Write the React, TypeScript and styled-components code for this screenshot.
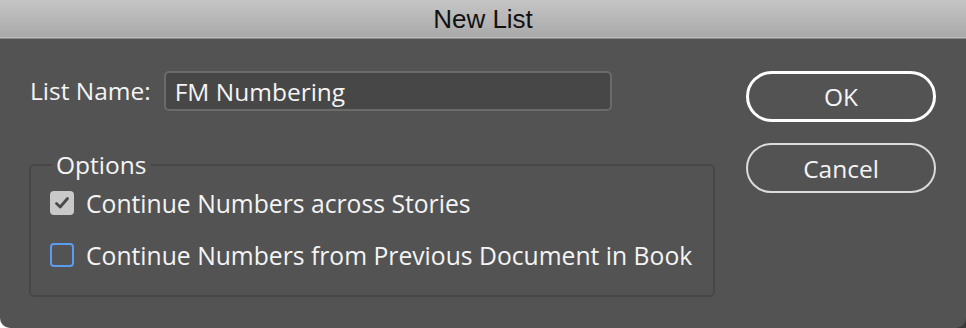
import styled, { createGlobalStyle } from 'styled-components';

const GlobalStyle = createGlobalStyle`
	html, body {
		margin: 0;
		padding: 0;
		background: linear-gradient(to right, #ffffff 50%, #3a3a3a 50%);
	}
	#root {
		width: 966px;
		height: 328px;
	}
`;

const Window = styled.div`
	width: 966px;
	height: 328px;
	display: flex;
	flex-direction: column;
	background: #535353;
	border-radius: 0 0 10px 10px;
	overflow: hidden;
	font-family: 'Open Sans', 'Noto Sans', sans-serif;
	font-weight: 500;
	color: #f4f4f4;
`;

const TitleBar = styled.div`
	height: 38px;
	flex: none;
	display: flex;
	align-items: center;
	justify-content: center;
	background: linear-gradient(#c6c5c6, #a9a8a9);
	border-bottom: 1px solid #8a898a;
	box-shadow: inset 0 -1px 0 #bdbcbd;
	font-family: 'Liberation Sans', Arial, sans-serif;
	font-weight: 400;
	font-size: 26px;
	color: #111;
`;

const Body = styled.div`
	flex: 1;
	display: flex;
	justify-content: space-between;
	padding: 32px 30px 0 29px;
`;

const LeftColumn = styled.div`
	width: 686px;
	display: flex;
	flex-direction: column;
`;

const NameRow = styled.div`
	display: flex;
	align-items: center;
	gap: 13px;
	padding-left: 1px;
`;

const Label = styled.label`
	font-size: 24.5px;
	line-height: 30px;
	white-space: nowrap;
`;

const TextField = styled.input`
	width: 448px;
	height: 40px;
	box-sizing: border-box;
	padding: 0 9px;
	background: #474747;
	border: 2px solid #6b6b6b;
	border-radius: 5px;
	color: #f4f4f4;
	font-family: inherit;
	font-weight: inherit;
	font-size: 24.5px;
	outline: none;
`;

const Options = styled.fieldset`
	margin: 39px 0 0;
	padding: 8px 0 25px 19px;
	border: 2px solid #474747;
	border-radius: 5px;
	display: flex;
	flex-direction: column;
	gap: 22px;
`;

const Legend = styled.legend`
	margin-left: 2px;
	padding: 0 5px 0 4px;
	font-size: 24.5px;
	line-height: 30px;
`;

const CheckRow = styled.label`
	display: flex;
	align-items: center;
	gap: 12px;
	height: 30px;
	font-size: 24.7px;
	white-space: nowrap;
`;

const Box = styled.span<{ $checked?: boolean }>`
	width: 24px;
	height: 24px;
	box-sizing: border-box;
	flex: none;
	display: flex;
	align-items: center;
	justify-content: center;
	border-radius: 4px;
	background: ${(p) => (p.$checked ? '#c9c9c9' : 'transparent')};
	border: ${(p) => (p.$checked ? 'none' : '2px solid #5b9bf0')};
`;

const ButtonColumn = styled.div`
	display: flex;
	flex-direction: column;
	gap: 21px;
`;

const PillButton = styled.button<{ $primary?: boolean }>`
	width: 190px;
	height: ${(p) => (p.$primary ? '51px' : '50px')};
	box-sizing: border-box;
	border-radius: 26px;
	background: transparent;
	border: ${(p) => (p.$primary ? '3px solid #ffffff' : '2px solid #dcdcdc')};
	color: #f4f4f4;
	font-family: inherit;
	font-weight: inherit;
	font-size: 24.5px;
	padding: 0;
	cursor: pointer;
`;

const Check = () => (
	<svg width="16" height="14" viewBox="0 0 16 14">
		<path d="M2.5 7.5 L6.2 11 L13.5 2.5" fill="none" stroke="#4a4a4a" strokeWidth="2.8" strokeLinecap="round" strokeLinejoin="round" />
	</svg>
);

const App = () => {
	return (
		<>
			<GlobalStyle />
			<Window>
				<TitleBar>New List</TitleBar>
				<Body>
					<LeftColumn>
						<NameRow>
							<Label htmlFor="list-name">List Name:</Label>
							<TextField id="list-name" defaultValue="FM Numbering" />
						</NameRow>
						<Options>
							<Legend>Options</Legend>
							<CheckRow>
								<Box $checked>
									<Check />
								</Box>
								Continue Numbers across Stories
							</CheckRow>
							<CheckRow>
								<Box />
								Continue Numbers from Previous Document in Book
							</CheckRow>
						</Options>
					</LeftColumn>
					<ButtonColumn>
						<PillButton $primary>OK</PillButton>
						<PillButton>Cancel</PillButton>
					</ButtonColumn>
				</Body>
			</Window>
		</>
	);
};

export default App;
